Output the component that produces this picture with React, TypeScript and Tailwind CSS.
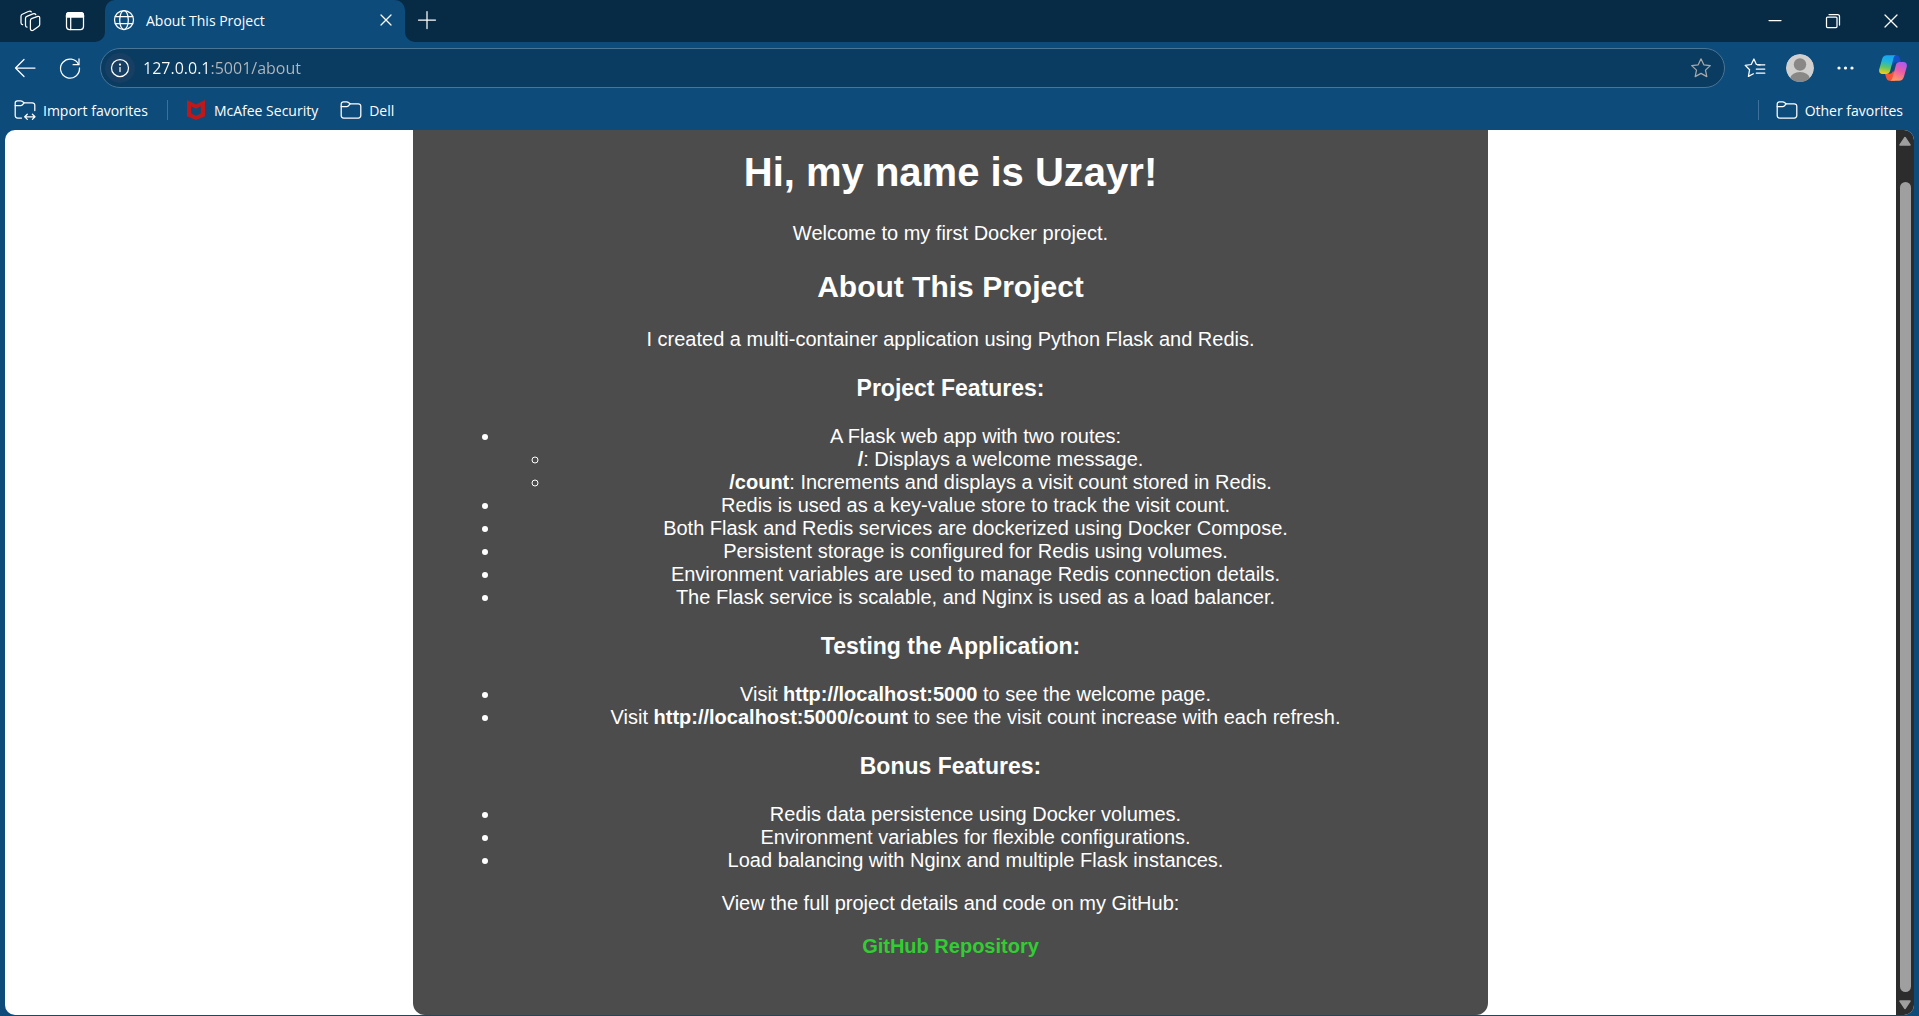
import React from "react";

type IconProps = { className?: string; children: React.ReactNode; box?: number };

function Icon({ className = "size-6", children, box = 24 }: IconProps) {
  return (
    <svg
      viewBox={`0 0 ${box} ${box}`}
      className={`shrink-0 ${className}`}
      fill="none"
      stroke="currentColor"
      strokeWidth="1.25"
      strokeLinecap="round"
      strokeLinejoin="round"
      aria-hidden="true"
    >
      {children}
    </svg>
  );
}

function WorkspacesIcon() {
  return (
    <Icon>
      <path d="M13.500 9.700l6.200-2.300c1.100-.4 2 .2 2 1.300v6.800c0 .9-.4 1.500-1.200 1.900l-5.300 3.800c-1.200.7-2.800.3-2.800-1.200v-8.300c0-1 .3-1.700 1.100-2z" />
      <path d="M9 18.200c-1-.2-1.500-.9-1.500-2V9.200c0-1 .5-1.600 1.300-1.900l6.100-2.500c1.300-.5 2.300-.3 2.900.8" />
      <path d="M4.600 15.700c-1-.2-1.600-.9-1.600-2V7.200c0-1 .5-1.600 1.300-2l6-2.700c1.300-.6 2.500-.5 3 .4" />
    </Icon>
  );
}

function TabActionsIcon() {
  return (
    <Icon>
      <rect x="3.500" y="3.500" width="17" height="17" rx="3" />
      <path d="M7.700 8v12.500" />
      <path d="M3.500 8V6a2.500 2.500 0 0 1 2.500-2.500h12a2.500 2.500 0 0 1 2.500 2.500v2z" fill="currentColor" />
    </Icon>
  );
}

function GlobeIcon() {
  return (
    <Icon>
      <circle cx="12" cy="12" r="9.500" />
      <ellipse cx="12" cy="12" rx="4.300" ry="9.500" />
      <path d="M3.300 8.500h17.400M3.300 15.500h17.400" />
    </Icon>
  );
}

function BackIcon() {
  return (
    <Icon>
      <path d="M22 12H2.500M11 3.500L2.500 12l8.500 8.500" />
    </Icon>
  );
}

function RefreshIcon() {
  return (
    <Icon>
      <path d="M20.600 8.500A9.500 9.500 0 1 0 21.500 12" />
      <path d="M21 2.800v5.900h-5.900" />
    </Icon>
  );
}

function InfoIcon() {
  return (
    <Icon>
      <circle cx="12" cy="12" r="8.500" />
      <path d="M12 11.500v4" />
      <circle cx="12" cy="8.600" r=".5" fill="currentColor" />
    </Icon>
  );
}

function StarIcon() {
  return (
    <Icon>
      <path d="M12 2.800l2.800 6 6.500.8-4.800 4.500 1.300 6.500L12 17.400l-5.800 3.200 1.300-6.500-4.800-4.500 6.500-.8z" />
    </Icon>
  );
}

function FavoritesIcon() {
  return (
    <Icon>
      <path d="M17 8.900l-3.600-.4L10.900 3 8.200 8.500l-6 .8 4.400 4.400-1.200 6.700 5-2.600" />
      <path d="M14.500 8.800h7.300M13.300 13h8.500M13.300 17.200h8.500" />
    </Icon>
  );
}

function FolderIcon() {
  return (
    <Icon>
      <path d="M2.200 17.500V6A2.200 2.200 0 0 1 4.400 3.800h3.400c.7 0 1.200.2 1.700.7l1.500 1.300h8.300A2.500 2.500 0 0 1 21.800 8.300v9.200a2.500 2.500 0 0 1-2.500 2.500H4.700a2.500 2.500 0 0 1-2.500-2.500z" />
      <path d="M2.200 8.500h5.600c.7 0 1.200-.2 1.700-.7l1.500-2" />
    </Icon>
  );
}

function ImportFolderIcon() {
  return (
    <Icon>
      <path d="M8.500 20H4.700a2.500 2.500 0 0 1-2.500-2.500V5A2.200 2.200 0 0 1 4.400 2.800h3.400c.7 0 1.200.2 1.700.7l1.500 1.300h8.300A2.500 2.500 0 0 1 21.800 7.300v5.200" />
      <path d="M2.200 7.500h5.600c.7 0 1.200-.2 1.700-.7l1.500-2" />
      <path d="M11.800 18.800h10M14.300 16.200l-2.600 2.600 2.600 2.600M19.400 16.200l2.600 2.600-2.600 2.600" />
    </Icon>
  );
}

function McAfeeIcon() {
  return (
    <svg viewBox="0 0 18 20" className="h-5 w-[18px] shrink-0" aria-hidden="true">
      <path
        fill="#c01818"
        d="M0 0l9 4.500L18 0v16.200L9 20l-9-3.800zM4.200 6.300v7.300L9 15.800l4.800-2.200V6.300L9 8.800z"
      />
    </svg>
  );
}

function CopilotIcon() {
  return (
    <svg viewBox="0 0 28 26" className="h-[26px] w-7 shrink-0" aria-hidden="true">
      <defs>
        <linearGradient id="cool" x1=".55" y1="0" x2=".4" y2="1">
          <stop offset="0" stopColor="#17a5f5" />
          <stop offset=".35" stopColor="#20b5d8" />
          <stop offset=".65" stopColor="#5fc46a" />
          <stop offset="1" stopColor="#f2cf10" />
        </linearGradient>
        <linearGradient id="warm" x1=".7" y1="0" x2=".35" y2="1">
          <stop offset="0" stopColor="#a95cf0" />
          <stop offset=".45" stopColor="#ec5aa8" />
          <stop offset="1" stopColor="#ff9a62" />
        </linearGradient>
      </defs>
      <path fill="#1450c8" d="M12 .3h5.500c1.700 0 2.700 1 3.200 2.600L22 7.300h-4.500c-2 0-3 1-3.600 3l-2.400-4z" />
      <path fill="#f4553a" d="M16 25.700h-5.500c-1.700 0-2.700-1-3.200-2.600L6 18.700h4.500c2 0 3-1 3.600-3l2.400 4z" />
      <path
        fill="url(#cool)"
        d="M8 .3h9c-1.700.2-2.200 1.700-2.700 3.700l-3.200 12c-.6 2-1.900 2.900-3.900 2.900H3.500C.8 18.900-.4 16.700.3 14L3 4.500C3.800 1.700 5.300.3 8 .3z"
      />
      <path
        fill="url(#warm)"
        d="M20 25.700h-9c1.700-.2 2.200-1.700 2.700-3.700l3.200-12c.6-2 1.900-2.900 3.900-2.900h3.700c2.700 0 3.900 2.200 3.200 4.900L25 21.500c-.8 2.800-2.300 4.200-5 4.200z"
      />
    </svg>
  );
}

function AvatarIcon() {
  return (
    <svg viewBox="0 0 28 28" className="size-7 shrink-0 rounded-full" aria-hidden="true">
      <circle cx="14" cy="14" r="14" fill="#d2d0ce" />
      <circle cx="14" cy="10.500" r="6.200" fill="#8a8886" />
      <ellipse cx="14" cy="24.500" rx="9.800" ry="6.500" fill="#8a8886" />
    </svg>
  );
}

function TabFlare({ className }: { className: string }) {
  return (
    <svg viewBox="0 0 10 10" className={`size-2.5 shrink-0 self-end ${className}`} aria-hidden="true">
      <path d="M10 0v10H0A10 10 0 0 0 10 0z" fill="#0d4b7b" />
    </svg>
  );
}

function TitleBar() {
  return (
    <header className="flex h-[42px] items-center bg-[#072a45]">
      <button aria-label="Workspaces" className="ml-[18px] flex">
        <WorkspacesIcon />
      </button>
      <button aria-label="Tab actions" className="ml-[21px] flex">
        <TabActionsIcon />
      </button>
      <div className="ml-2 flex h-full">
        <TabFlare className="" />
        <div className="flex w-[300px] items-center rounded-t-[10px] bg-[#0d4b7b] pr-[7px] pb-0.5 pl-[7px]">
          <GlobeIcon />
          <span className="ml-2.5 flex-1 text-[14px]">About This Project</span>
          <button aria-label="Close tab" className="flex">
            <Icon>
              <path d="M7 7l10 10M17 7L7 17" />
            </Icon>
          </button>
        </div>
        <TabFlare className="-scale-x-100" />
      </div>
      <button aria-label="New tab" className="flex pb-0.5">
        <Icon>
          <path d="M12 3.500v17M3.500 12h17" />
        </Icon>
      </button>
      <div className="mr-4 ml-auto flex gap-[34px]">
        <button aria-label="Minimize" className="flex">
          <Icon>
            <path d="M6 11.500h12" />
          </Icon>
        </button>
        <button aria-label="Restore" className="flex">
          <Icon>
            <rect x="5.500" y="8" width="10.500" height="10.500" rx="1" />
            <path d="M8 5.500h8.500a2 2 0 0 1 2 2V16" />
          </Icon>
        </button>
        <button aria-label="Close window" className="flex">
          <Icon>
            <path d="M6 6l12 12M18 6L6 18" />
          </Icon>
        </button>
      </div>
    </header>
  );
}

function Toolbar() {
  return (
    <div className="flex h-[52px] items-center px-3">
      <button aria-label="Back" className="ml-px flex">
        <BackIcon />
      </button>
      <button aria-label="Refresh" className="ml-[21px] flex">
        <RefreshIcon />
      </button>
      <div className="ml-[18px] flex h-10 flex-1 items-center rounded-full border border-[#4a7595] bg-[#0a3b60] pr-[11px] pl-1">
        <button
          aria-label="Site information"
          className="flex size-[30px] items-center justify-center rounded-full bg-[#173f63]"
        >
          <InfoIcon />
        </button>
        <input
          aria-label="Address"
          defaultValue="127.0.0.1:5001/about"
          className="ml-2 flex-1 bg-[linear-gradient(to_right,#ffffff_67px,#b4b8bc_67px)] bg-clip-text text-[16px] text-transparent caret-white outline-none"
        />
        <button aria-label="Add to favorites" className="flex text-[#a8a8a8]">
          <StarIcon />
        </button>
      </div>
      <button aria-label="Favorites" className="ml-[18px] flex">
        <FavoritesIcon />
      </button>
      <button aria-label="Profile" className="ml-[19px] flex">
        <AvatarIcon />
      </button>
      <button aria-label="Settings and more" className="ml-5 flex">
        <Icon>
          <g fill="currentColor" stroke="none">
            <circle cx="5" cy="12" r="1.600" />
            <circle cx="11.500" cy="12" r="1.600" />
            <circle cx="18" cy="12" r="1.600" />
          </g>
        </Icon>
      </button>
      <button aria-label="Copilot" className="ml-[21px] flex">
        <CopilotIcon />
      </button>
    </div>
  );
}

function FavoritesBar() {
  return (
    <nav aria-label="Favorites bar" className="flex h-9 items-center pr-4 pb-1 pl-[13px] text-[14px]">
      <button className="flex items-center gap-1.5">
        <ImportFolderIcon />
        Import favorites
      </button>
      <span className="ml-[19px] h-5 w-px bg-[#3d709a]" />
      <button className="ml-[19px] flex items-center gap-[9px]">
        <McAfeeIcon />
        McAfee Security
      </button>
      <button className="ml-[21px] flex items-center gap-1.5">
        <FolderIcon />
        Dell
      </button>
      <span className="ml-auto h-5 w-px bg-[#3d709a]" />
      <button className="ml-4 flex items-center gap-1.5">
        <FolderIcon />
        Other favorites
      </button>
    </nav>
  );
}

function SectionTitle({ children }: { children: React.ReactNode }) {
  return <h3 className="mt-6 mb-[23px] text-[23px] leading-[27px] font-bold">{children}</h3>;
}

function AboutPage() {
  return (
    <main className="mx-auto w-full max-w-[1075px] rounded-b-xl bg-[#4c4c4c] px-[38px] pt-[19px] pb-[57px] text-center font-['Liberation_Sans',Arial,sans-serif] text-[20px] leading-[23px] text-white">
      <h1 className="text-[40px] leading-[46px] font-bold">Hi, my name is Uzayr!</h1>
      <p className="mt-[27px]">Welcome to my first Docker project.</p>
      <h2 className="mt-[25px] mb-6 text-[30px] leading-[34px] font-bold">About This Project</h2>
      <p>I created a multi-container application using Python Flask and Redis.</p>

      <SectionTitle>Project Features:</SectionTitle>
      <ul className="list-disc pl-[50px]">
        <li>
          A Flask web app with two routes:
          <ul className="list-[circle] pl-[50px]">
            <li>
              <strong>/</strong>: Displays a welcome message.
            </li>
            <li>
              <strong>/count</strong>: Increments and displays a visit count stored in Redis.
            </li>
          </ul>
        </li>
        <li>Redis is used as a key-value store to track the visit count.</li>
        <li>Both Flask and Redis services are dockerized using Docker Compose.</li>
        <li>Persistent storage is configured for Redis using volumes.</li>
        <li>Environment variables are used to manage Redis connection details.</li>
        <li>The Flask service is scalable, and Nginx is used as a load balancer.</li>
      </ul>

      <SectionTitle>Testing the Application:</SectionTitle>
      <ul className="list-disc pl-[50px]">
        <li>
          Visit <strong>http://localhost:5000</strong> to see the welcome page.
        </li>
        <li>
          Visit <strong>http://localhost:5000/count</strong> to see the visit count increase with each refresh.
        </li>
      </ul>

      <SectionTitle>Bonus Features:</SectionTitle>
      <ul className="list-disc pl-[50px]">
        <li>Redis data persistence using Docker volumes.</li>
        <li>Environment variables for flexible configurations.</li>
        <li>Load balancing with Nginx and multiple Flask instances.</li>
      </ul>

      <p className="my-5">View the full project details and code on my GitHub:</p>
      <p>
        <a href="#github" className="font-bold text-[#32cd32]">
          GitHub Repository
        </a>
      </p>
    </main>
  );
}

function ScrollBar() {
  return (
    <div className="flex w-[18px] shrink-0 flex-col items-center bg-[#2c2c2c] text-[#9f9f9f]">
      <button aria-label="Scroll up" className="flex h-[52px] pt-1.5">
        <svg viewBox="0 0 12 10" className="h-2.5 w-3" aria-hidden="true">
          <path d="M6 1.500L11 9H1z" fill="currentColor" stroke="currentColor" strokeWidth="1.500" strokeLinejoin="round" />
        </svg>
      </button>
      <div className="w-[11px] flex-1 rounded-full bg-[#9f9f9f]" />
      <button aria-label="Scroll down" className="flex h-[23px] items-end pb-[5px]">
        <svg viewBox="0 0 12 10" className="h-2.5 w-3" aria-hidden="true">
          <path d="M6 8.500L1 1h10z" fill="currentColor" stroke="currentColor" strokeWidth="1.500" strokeLinejoin="round" />
        </svg>
      </button>
    </div>
  );
}

export default function App() {
  return (
    <div className="flex min-h-screen flex-col bg-[#0d4b7b] font-['Open_Sans','Noto_Sans',sans-serif] text-white">
      <TitleBar />
      <Toolbar />
      <FavoritesBar />
      <div className="mr-[5px] mb-px ml-[5px] flex flex-1 overflow-hidden rounded-[10px] bg-white">
        <div className="flex-1">
          <AboutPage />
        </div>
        <ScrollBar />
      </div>
    </div>
  );
}
